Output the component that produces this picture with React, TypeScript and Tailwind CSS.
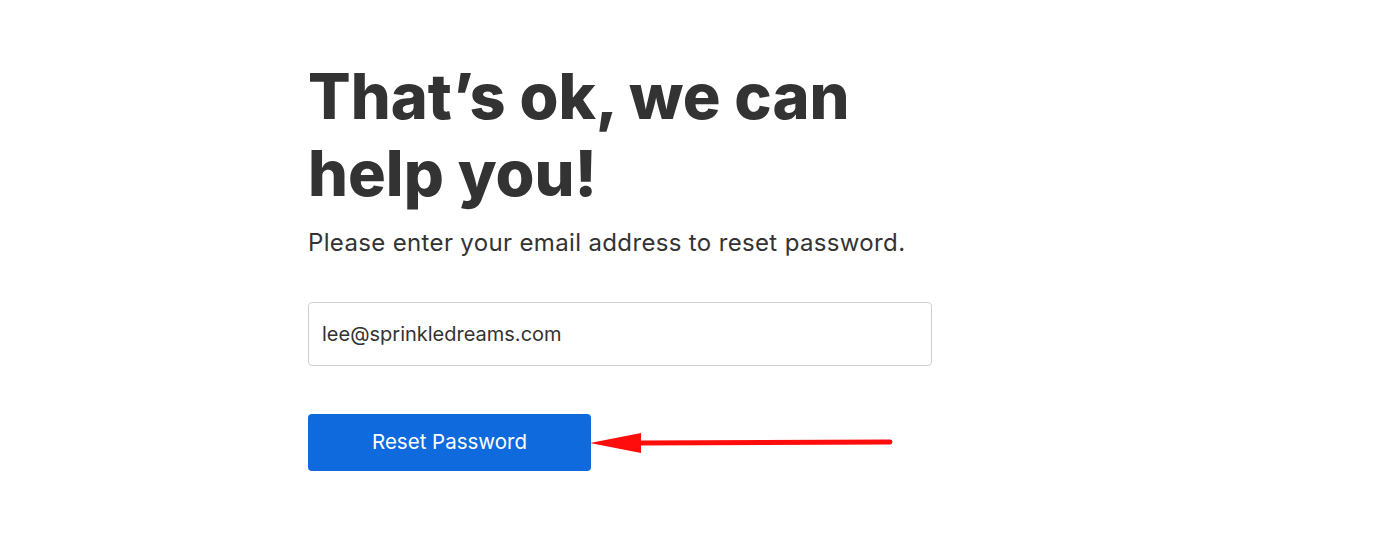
export default function App() {
  return (
    <div className="min-h-[556px] w-full bg-white font-['Inter',_'Liberation_Sans',_sans-serif] text-[#333333]">
      <div className="pl-[308px] pt-[58px]">
        <div className="w-[624px]">
          <h1 className="text-[63px] leading-[77px] font-extrabold tracking-[0px]">
            That’s ok, we can
            <br />
            help you!
          </h1>
          <p className="mt-[16px] text-[24px] leading-[30px] tracking-[0.35px]">
            Please enter your email address to reset password.
          </p>

          <form className="mt-[44px]" onSubmit={(e) => e.preventDefault()}>
            <input
              type="email"
              defaultValue="lee@sprinkledreams.com"
              className="block h-[64px] w-[624px] rounded-[4px] border border-[#cfcfcf] px-[13px] text-[20px] text-[#333333] outline-none"
            />

            <div className="mt-[48px] flex items-center">
              <button
                type="submit"
                className="h-[57px] w-[283px] rounded-[4px] bg-[#0f6ade] text-[20.5px] text-white"
              >
                Reset Password
              </button>
              {/* annotation arrow */}
              <svg width="306" height="24" viewBox="0 0 306 24" className="-ml-px">
                <polygon points="0,12 51,2 51,22" fill="#ff0d0d" />
                <line x1="48" y1="12" x2="300" y2="11" stroke="#ff0d0d" strokeWidth="5" strokeLinecap="round" />
              </svg>
            </div>
          </form>
        </div>
      </div>
    </div>
  )
}
